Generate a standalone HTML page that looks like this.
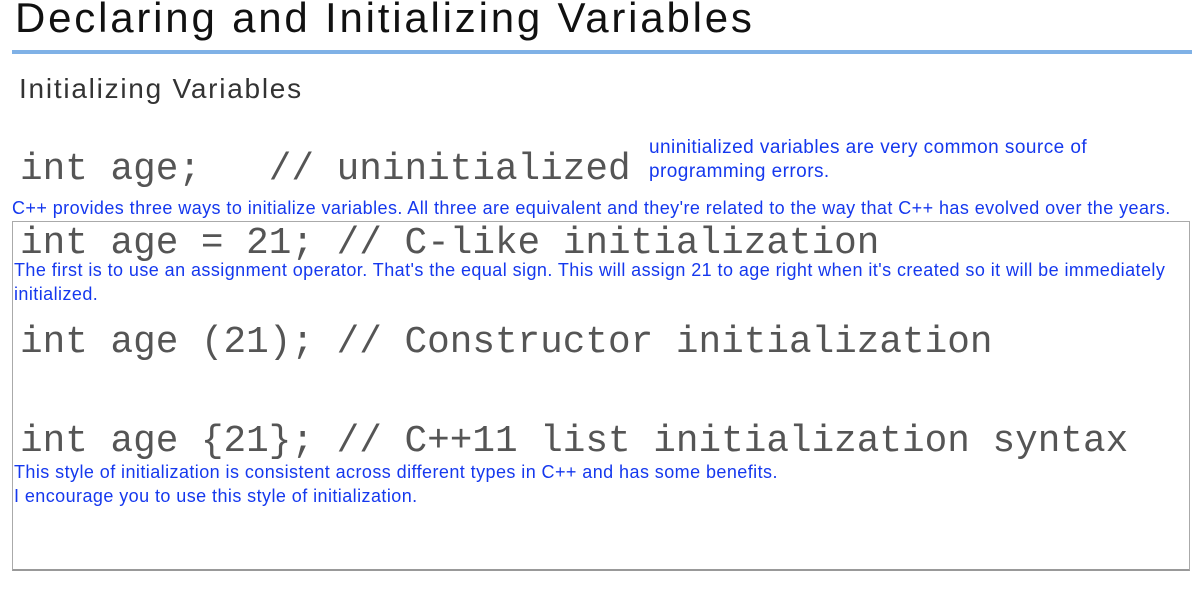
<!DOCTYPE html>
<html><head><meta charset="utf-8"><style>
html,body{margin:0;padding:0;background:#fff;width:1202px;height:592px;overflow:hidden;position:relative}
div{position:absolute;white-space:nowrap}
.t{font-family:"Liberation Sans",sans-serif;color:#111;font-size:42px;left:15px;top:-6px;letter-spacing:2.8px}
.s{font-family:"Liberation Sans",sans-serif;color:#333;font-size:28px;left:19px;top:73px;letter-spacing:1.75px}
.m{font-family:"Liberation Mono",monospace;color:#555;font-size:37.7px;left:20px;line-height:1}
.b{font-family:"Liberation Sans",sans-serif;color:#1538ee;font-size:18px;line-height:24px;letter-spacing:0.43px}
</style></head><body>
<div class="t">Declaring and Initializing Variables</div>
<div style="left:12px;top:50px;width:1180px;height:4px;background:#7fb1e6"></div>
<div class="s">Initializing Variables</div>
<div class="m" style="top:152px">int age;&nbsp;&nbsp;&nbsp;// uninitialized</div>
<div class="b" style="left:649px;top:136px;font-size:19px;letter-spacing:0.45px">uninitialized variables are very common source of<br>programming errors.</div>
<div class="b" style="left:12px;top:196px">C++ provides three ways to initialize variables. All three are equivalent and they're related to the way that C++ has evolved over the years.</div>
<div style="left:12px;top:221px;width:1176px;height:347px;border:1px solid #aaa;border-bottom:2px solid #999"></div>
<div class="m" style="top:226px">int age = 21; // C-like initialization</div>
<div class="b" style="left:14px;top:258px">The first is to use an assignment operator. That's the equal sign. This will assign 21 to age right when it's created so it will be immediately<br>initialized.</div>
<div class="m" style="top:325px">int age (21); // Constructor initialization</div>
<div class="m" style="top:424px">int age {21}; // C++11 list initialization syntax</div>
<div class="b" style="left:14px;top:460px">This style of initialization is consistent across different types in C++ and has some benefits.<br>I encourage you to use this style of initialization.</div>
</body></html>
